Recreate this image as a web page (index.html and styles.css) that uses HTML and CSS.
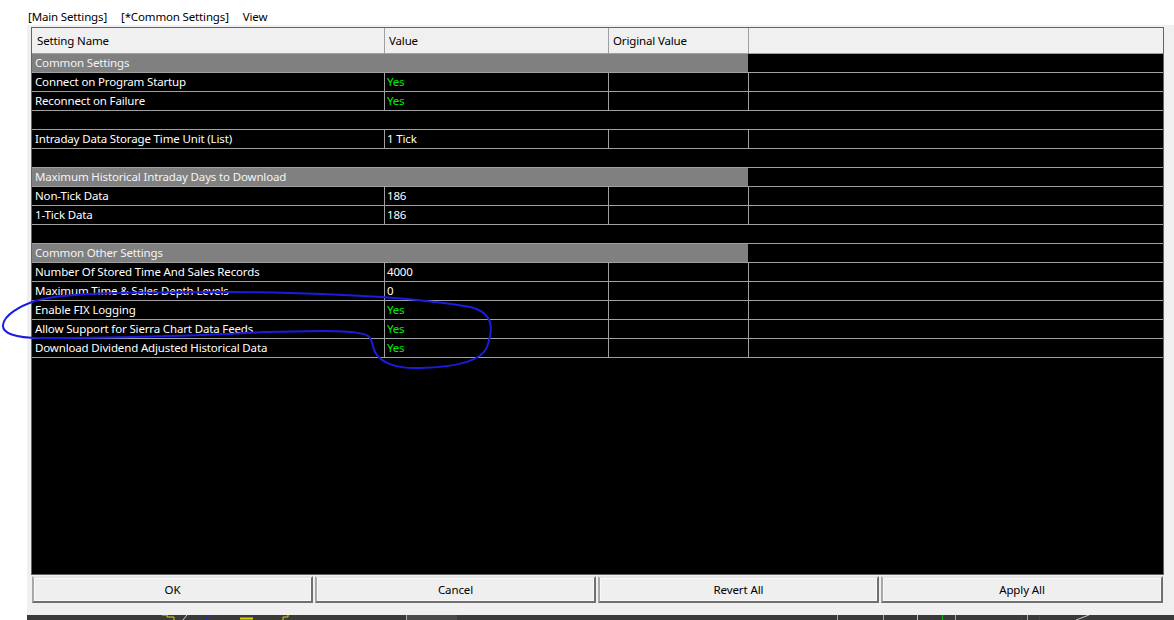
FILE: index.html
```html
<!DOCTYPE html>
<html lang="en">
<head>
  <meta charset="UTF-8">
  <title>Common Settings</title>
  <link rel="stylesheet" href="styles.css">
</head>
<body>

  <div class="tabs">
    <span class="tab">[Main Settings]</span>
    <span class="tab">[*Common Settings]</span>
    <span class="tab">View</span>
  </div>

  <div class="dialog">
    <div class="grid">
      <div class="row head">
        <div class="cell name">Setting Name</div>
        <div class="cell">Value</div>
        <div class="cell">Original Value</div>
        <div class="cell"></div>
      </div>

      <div class="row section">
        <div class="cell span">Common Settings</div>
        <div class="cell"></div>
      </div>
      <div class="row">
        <div class="cell name">Connect on Program Startup</div>
        <div class="cell val yes">Yes</div>
        <div class="cell"></div>
        <div class="cell"></div>
      </div>
      <div class="row">
        <div class="cell name">Reconnect on Failure</div>
        <div class="cell val yes">Yes</div>
        <div class="cell"></div>
        <div class="cell"></div>
      </div>
      <div class="row blank"></div>
      <div class="row">
        <div class="cell name">Intraday Data Storage Time Unit (List)</div>
        <div class="cell val">1 Tick</div>
        <div class="cell"></div>
        <div class="cell"></div>
      </div>
      <div class="row blank"></div>

      <div class="row section">
        <div class="cell span">Maximum Historical Intraday Days to Download</div>
        <div class="cell"></div>
      </div>
      <div class="row">
        <div class="cell name">Non-Tick Data</div>
        <div class="cell val">186</div>
        <div class="cell"></div>
        <div class="cell"></div>
      </div>
      <div class="row">
        <div class="cell name">1-Tick Data</div>
        <div class="cell val">186</div>
        <div class="cell"></div>
        <div class="cell"></div>
      </div>
      <div class="row blank"></div>

      <div class="row section">
        <div class="cell span">Common Other Settings</div>
        <div class="cell"></div>
      </div>
      <div class="row">
        <div class="cell name">Number Of Stored Time And Sales Records</div>
        <div class="cell val">4000</div>
        <div class="cell"></div>
        <div class="cell"></div>
      </div>
      <div class="row">
        <div class="cell name">Maximum Time &amp; Sales Depth Levels</div>
        <div class="cell val">0</div>
        <div class="cell"></div>
        <div class="cell"></div>
      </div>
      <div class="row">
        <div class="cell name">Enable FIX Logging</div>
        <div class="cell val yes">Yes</div>
        <div class="cell"></div>
        <div class="cell"></div>
      </div>
      <div class="row">
        <div class="cell name">Allow Support for Sierra Chart Data Feeds</div>
        <div class="cell val yes">Yes</div>
        <div class="cell"></div>
        <div class="cell"></div>
      </div>
      <div class="row">
        <div class="cell name">Download Dividend Adjusted Historical Data</div>
        <div class="cell val yes">Yes</div>
        <div class="cell"></div>
        <div class="cell"></div>
      </div>
    </div>

    <div class="buttons">
      <button>OK</button>
      <button>Cancel</button>
      <button>Revert All</button>
      <button>Apply All</button>
    </div>
  </div>

  <div class="chart-strip">
    <svg width="1147" height="5" viewBox="27 615 1147 5">
      <polyline points="162,615 167,615 167,617 174,617 174,620" fill="none" stroke="#d8d800" stroke-width="1"/>
      <line x1="183" y1="620" x2="187" y2="615" stroke="#cccccc"/>
      <line x1="206" y1="620" x2="209" y2="615" stroke="#2020ff"/>
      <line x1="240" y1="618.5" x2="253" y2="618.5" stroke="#d8d800" stroke-width="2"/>
      <polyline points="283,620 283,617 288,617 288,615" fill="none" stroke="#d8d800"/>
      <rect x="407" y="615" width="50" height="5" fill="#4a4a4a"/>
      <line x1="406.5" y1="615" x2="406.5" y2="620" stroke="#aaaaaa"/>
      <line x1="837.5" y1="615" x2="837.5" y2="620" stroke="#aaaaaa"/>
      <line x1="883.5" y1="615" x2="883.5" y2="620" stroke="#aaaaaa"/>
      <line x1="917.5" y1="615" x2="917.5" y2="620" stroke="#d8d800"/>
      <line x1="942.5" y1="615" x2="942.5" y2="620" stroke="#00c000"/>
      <line x1="955.5" y1="615" x2="955.5" y2="620" stroke="#aaaaaa"/>
      <line x1="1021.5" y1="615" x2="1021.5" y2="620" stroke="#e00000"/>
      <line x1="1027.5" y1="615" x2="1027.5" y2="620" stroke="#aaaaaa"/>
      <line x1="1039.5" y1="615" x2="1039.5" y2="620" stroke="#3030ff"/>
      <line x1="1076" y1="620" x2="1089" y2="615" stroke="#cccccc"/>
    </svg>
  </div>

  <!-- hand drawn highlight over the list -->
  <svg class="scribble" width="1174" height="620" viewBox="0 0 1174 620">
    <path d="M 370 338 C 368 333, 350 331, 323 331 L 265 332 C 200 336, 100 338, 40 338 C 15 338, 2 333, 3 325 C 4 315, 20 306, 35 301 C 60 293, 120 292, 233 292 C 330 293, 420 298, 470 307 C 495 313, 493 330, 487 347 C 482 360, 460 367, 420 368 C 395 369, 380 362, 375 352 C 372 345, 372 340, 370 338" fill="none" stroke="#1c1ce0" stroke-width="2" stroke-linecap="round"/>
  </svg>

</body>
</html>
```

FILE: styles.css
```css
body {
  margin: 0;
  background-color: #ffffff;
  font-family: "Noto Sans", "Open Sans", sans-serif;
  font-size: 11.5px;
  letter-spacing: -0.15px;
  color: #000;
  position: relative;
  width: 1174px;
  height: 620px;
  overflow: hidden;
}

.tabs {
  height: 25px;
  box-sizing: border-box;
  display: flex;
  padding: 9px 0 0 28px;
  line-height: 16px;
  gap: 14px;
}

.dialog {
  margin-left: 27px;
  height: 590px;
  padding: 2px 10px 0 4px;
  box-sizing: border-box;
  background-color: #f0f0f0;
}

.grid {
  height: 548px;
  box-sizing: border-box;
  border: 1px solid #646464;
  background-color: #000;
}

.row {
  display: grid;
  grid-template-columns: 353px 224px 140px 1fr;
  height: 19px;
  box-sizing: border-box;
  border-bottom: 1px solid #a0a0a0;
  color: #fff;
}

.cell {
  border-right: 1px solid #a0a0a0;
  line-height: 17px;
  padding-left: 3px;
  white-space: nowrap;
  overflow: hidden;
}

.cell:last-child {
  border-right: none;
}

.cell.val {
  padding-left: 2px;
}

.yes {
  color: #00f000;
}

.head {
  height: 26px;
  background-color: #f0f0f0;
  color: #000;
}

.head .cell {
  line-height: 25px;
  padding-left: 4px;
}

.head .cell.name {
  padding-left: 5px;
}

.section {
  grid-template-columns: 716px 1fr;
}

.section .span {
  background-color: #808080;
  color: #f4f4f4;
  border-right: none;
}

.buttons {
  display: grid;
  grid-template-columns: 281px 281px 281px 1fr;
  gap: 2px;
  margin: 1px 1px 0 1px;
  height: 27px;
}

button {
  font-family: inherit;
  font-size: 11.5px;
  letter-spacing: -0.1px;
  color: #000;
  background-color: #efefef;
  border: 2px solid;
  border-color: #e4e4e4 #707070 #707070 #a8a8a8;
  padding: 0;
  box-shadow: inset 0 0 0 1px #f8f8f8;
}

.chart-strip {
  margin-left: 27px;
  height: 5px;
  background-color: #3a3a3a;
  overflow: hidden;
}

.chart-strip svg {
  display: block;
}

.scribble {
  position: absolute;
  left: 0;
  top: 0;
  pointer-events: none;
}
```
